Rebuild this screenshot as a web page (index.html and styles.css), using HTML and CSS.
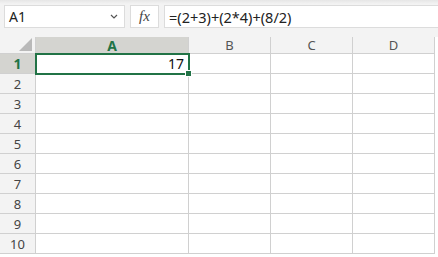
FILE: index.html
```html
<!DOCTYPE html>
<html>
<head>
  <title>Sheet</title>
  <link rel="stylesheet" href="styles.css">
</head>
<body>
  <div class="formula-bar">
    <div class="name-box">
      <span>A1</span>
      <svg class="chevron" width="8" height="5" viewBox="0 0 8 5"><path d="M1 1 L4 4 L7 1" fill="none" stroke="#555" stroke-width="1.2"/></svg>
    </div>
    <div class="fx-box"><span class="fx">fx</span></div>
    <div class="formula-input">=(2+3)+(2*4)+(8/2)</div>
  </div>
  <div class="sheet">
    <div class="corner"><span class="corner-tri"></span></div>
    <div class="col-head selected">A</div>
    <div class="col-head">B</div>
    <div class="col-head">C</div>
    <div class="col-head">D</div>

    <div class="row-head selected">1</div>
    <div class="cell active">17</div>
    <div class="cell"></div><div class="cell"></div><div class="cell"></div>

    <div class="row-head">2</div>
    <div class="cell"></div><div class="cell"></div><div class="cell"></div><div class="cell"></div>
    <div class="row-head">3</div>
    <div class="cell"></div><div class="cell"></div><div class="cell"></div><div class="cell"></div>
    <div class="row-head">4</div>
    <div class="cell"></div><div class="cell"></div><div class="cell"></div><div class="cell"></div>
    <div class="row-head">5</div>
    <div class="cell"></div><div class="cell"></div><div class="cell"></div><div class="cell"></div>
    <div class="row-head">6</div>
    <div class="cell"></div><div class="cell"></div><div class="cell"></div><div class="cell"></div>
    <div class="row-head">7</div>
    <div class="cell"></div><div class="cell"></div><div class="cell"></div><div class="cell"></div>
    <div class="row-head">8</div>
    <div class="cell"></div><div class="cell"></div><div class="cell"></div><div class="cell"></div>
    <div class="row-head">9</div>
    <div class="cell"></div><div class="cell"></div><div class="cell"></div><div class="cell"></div>
    <div class="row-head">10</div>
    <div class="cell"></div><div class="cell"></div><div class="cell"></div><div class="cell"></div>
  </div>
</body>
</html>
```

FILE: styles.css
```css
body {
  margin: 0;
  background: #fff;
  font-family: "Noto Sans", "Open Sans", sans-serif;
  color: #222;
  overflow: hidden;
}

.formula-bar {
  display: flex;
  gap: 5px;
  height: 37px;
  box-sizing: border-box;
  padding: 5px 0 0 4px;
  background: linear-gradient(#e6e6e6 0, #f3f3f3 4px, #f3f3f3 100%);
}

.name-box,
.fx-box,
.formula-input {
  height: 23px;
  box-sizing: border-box;
  background: #fff;
  border: 1px solid #dcdcdc;
  display: flex;
  align-items: center;
  font-size: 14px;
  color: #222;
}

.name-box {
  width: 121px;
  padding: 0 6px 0 4px;
  justify-content: space-between;
}

.fx-box {
  width: 29px;
  justify-content: center;
}

.fx {
  font-family: "Liberation Serif", serif;
  font-style: italic;
  font-size: 15px;
  color: #444;
}

.formula-input {
  flex: 1;
  padding-left: 4px;
  border-right: none;
  font-size: 14.5px;
}

.sheet {
  display: grid;
  grid-template-columns: 36px 153px 82px 82px 82px;
  grid-template-rows: 17px repeat(10, 20px);
}

.corner,
.col-head,
.row-head,
.cell {
  border-right: 1px solid #d0d0d0;
  border-bottom: 1px solid #d0d0d0;
  box-sizing: border-box;
}

.corner {
  background: #f3f3f3;
  position: relative;
}

.corner-tri {
  position: absolute;
  right: 3px;
  bottom: 2px;
  width: 0;
  height: 0;
  border-left: 13px solid transparent;
  border-bottom: 13px solid #b9b9b9;
}

.col-head,
.row-head {
  background: #f3f3f3;
  font-size: 13px;
  color: #555;
  display: flex;
  align-items: center;
  justify-content: center;
}

.row-head {
  color: #444;
}

.col-head.selected,
.row-head.selected {
  background: #d4d4d0;
  color: #217346;
  font-weight: bold;
  font-size: 14px;
}

.cell {
  font-size: 14px;
  color: #111;
  display: flex;
  align-items: center;
  justify-content: flex-end;
  padding-right: 3px;
}

.cell.active {
  position: relative;
  outline: 2px solid #217346;
  outline-offset: -1px;
  padding-right: 4px;
}

.cell.active::after {
  content: "";
  position: absolute;
  right: -4px;
  bottom: -4px;
  width: 5px;
  height: 5px;
  background: #217346;
  border: 1px solid #fff;
}
```
